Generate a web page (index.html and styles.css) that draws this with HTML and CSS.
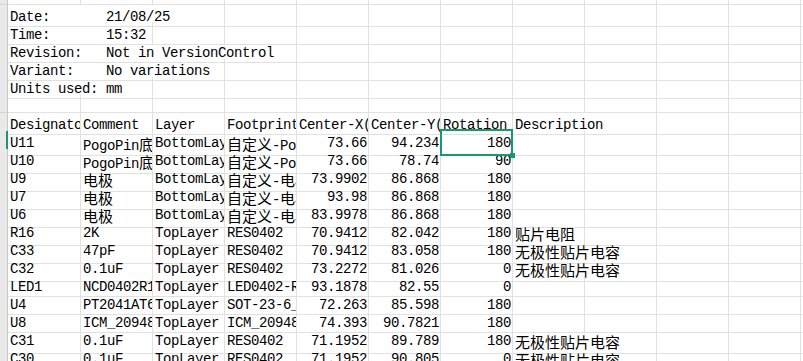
FILE: index.html
```html
<!DOCTYPE html>
<html lang="zh-CN">
<head>
<meta charset="utf-8">
<title>BOM</title>
<link rel="stylesheet" href="styles.css">
</head>
<body>
<div class="sheet">
  <div class="row top"><div class="rh"></div><div class="c"></div><div class="c"></div><div class="c"></div><div class="c"></div><div class="c"></div><div class="c"></div><div class="c"></div><div class="c"></div><div class="c"></div><div class="c"></div><div class="c"></div><div class="f"></div></div>

  <div class="row"><div class="rh"></div><div class="c s3">Date:       21/08/25</div><div class="c"></div><div class="c"></div><div class="c"></div><div class="c"></div><div class="c"></div><div class="c"></div><div class="c"></div><div class="c"></div><div class="f"></div></div>
  <div class="row"><div class="rh"></div><div class="c s2">Time:       15:32</div><div class="c"></div><div class="c"></div><div class="c"></div><div class="c"></div><div class="c"></div><div class="c"></div><div class="c"></div><div class="c"></div><div class="c"></div><div class="f"></div></div>
  <div class="row"><div class="rh"></div><div class="c s4">Revision:   Not in VersionControl</div><div class="c"></div><div class="c"></div><div class="c"></div><div class="c"></div><div class="c"></div><div class="c"></div><div class="c"></div><div class="f"></div></div>
  <div class="row"><div class="rh"></div><div class="c s3">Variant:    No variations</div><div class="c"></div><div class="c"></div><div class="c"></div><div class="c"></div><div class="c"></div><div class="c"></div><div class="c"></div><div class="c"></div><div class="f"></div></div>
  <div class="row"><div class="rh"></div><div class="c s2">Units used: mm</div><div class="c"></div><div class="c"></div><div class="c"></div><div class="c"></div><div class="c"></div><div class="c"></div><div class="c"></div><div class="c"></div><div class="c"></div><div class="f"></div></div>
  <div class="row"><div class="rh"></div><div class="c"></div><div class="c"></div><div class="c"></div><div class="c"></div><div class="c"></div><div class="c"></div><div class="c"></div><div class="c"></div><div class="c"></div><div class="c"></div><div class="c"></div><div class="f"></div></div>

  <div class="row"><div class="rh"></div><div class="c">Designator</div><div class="c">Comment</div><div class="c">Layer</div><div class="c">Footprint</div><div class="c">Center-X(mm)</div><div class="c">Center-Y(mm)</div><div class="c">Rotation</div><div class="c s2">Description</div><div class="c"></div><div class="c"></div><div class="f"></div></div>

  <div class="row"><div class="rh active"></div><div class="c">U11</div><div class="c">PogoPin<span class="z">底座</span></div><div class="c">BottomLayer</div><div class="c"><span class="z">自定义</span>-PogoPin</div><div class="c n">73.66</div><div class="c n">94.234</div><div class="c n sel">180<div class="selbox"><div class="handle"></div></div></div><div class="c"></div><div class="c"></div><div class="c"></div><div class="c"></div><div class="f"></div></div>
  <div class="row"><div class="rh"></div><div class="c">U10</div><div class="c">PogoPin<span class="z">底座</span></div><div class="c">BottomLayer</div><div class="c"><span class="z">自定义</span>-PogoPin</div><div class="c n">73.66</div><div class="c n">78.74</div><div class="c n">90</div><div class="c"></div><div class="c"></div><div class="c"></div><div class="c"></div><div class="f"></div></div>
  <div class="row"><div class="rh"></div><div class="c">U9</div><div class="c"><span class="z">电极</span></div><div class="c">BottomLayer</div><div class="c"><span class="z">自定义</span>-<span class="z">电极</span></div><div class="c n">73.9902</div><div class="c n">86.868</div><div class="c n">180</div><div class="c"></div><div class="c"></div><div class="c"></div><div class="c"></div><div class="f"></div></div>
  <div class="row"><div class="rh"></div><div class="c">U7</div><div class="c"><span class="z">电极</span></div><div class="c">BottomLayer</div><div class="c"><span class="z">自定义</span>-<span class="z">电极</span></div><div class="c n">93.98</div><div class="c n">86.868</div><div class="c n">180</div><div class="c"></div><div class="c"></div><div class="c"></div><div class="c"></div><div class="f"></div></div>
  <div class="row"><div class="rh"></div><div class="c">U6</div><div class="c"><span class="z">电极</span></div><div class="c">BottomLayer</div><div class="c"><span class="z">自定义</span>-<span class="z">电极</span></div><div class="c n">83.9978</div><div class="c n">86.868</div><div class="c n">180</div><div class="c"></div><div class="c"></div><div class="c"></div><div class="c"></div><div class="f"></div></div>
  <div class="row"><div class="rh"></div><div class="c">R16</div><div class="c">2K</div><div class="c">TopLayer</div><div class="c">RES0402</div><div class="c n">70.9412</div><div class="c n">82.042</div><div class="c n">180</div><div class="c"><span class="z">贴片电阻</span></div><div class="c"></div><div class="c"></div><div class="c"></div><div class="f"></div></div>
  <div class="row"><div class="rh"></div><div class="c">C33</div><div class="c">47pF</div><div class="c">TopLayer</div><div class="c">RES0402</div><div class="c n">70.9412</div><div class="c n">83.058</div><div class="c n">180</div><div class="c s2"><span class="z">无极性贴片电容</span></div><div class="c"></div><div class="c"></div><div class="f"></div></div>
  <div class="row"><div class="rh"></div><div class="c">C32</div><div class="c">0.1uF</div><div class="c">TopLayer</div><div class="c">RES0402</div><div class="c n">73.2272</div><div class="c n">81.026</div><div class="c n">0</div><div class="c s2"><span class="z">无极性贴片电容</span></div><div class="c"></div><div class="c"></div><div class="f"></div></div>
  <div class="row"><div class="rh"></div><div class="c">LED1</div><div class="c">NCD0402R1</div><div class="c">TopLayer</div><div class="c">LED0402-RD</div><div class="c n">93.1878</div><div class="c n">82.55</div><div class="c n">0</div><div class="c"></div><div class="c"></div><div class="c"></div><div class="c"></div><div class="f"></div></div>
  <div class="row"><div class="rh"></div><div class="c">U4</div><div class="c">PT2041AT6</div><div class="c">TopLayer</div><div class="c">SOT-23-6_L2.9-W1.6</div><div class="c n">72.263</div><div class="c n">85.598</div><div class="c n">180</div><div class="c"></div><div class="c"></div><div class="c"></div><div class="c"></div><div class="f"></div></div>
  <div class="row"><div class="rh"></div><div class="c">U8</div><div class="c">ICM_20948</div><div class="c">TopLayer</div><div class="c">ICM_20948</div><div class="c n">74.393</div><div class="c n">90.7821</div><div class="c n">180</div><div class="c"></div><div class="c"></div><div class="c"></div><div class="c"></div><div class="f"></div></div>
  <div class="row"><div class="rh"></div><div class="c">C31</div><div class="c">0.1uF</div><div class="c">TopLayer</div><div class="c">RES0402</div><div class="c n">71.1952</div><div class="c n">89.789</div><div class="c n">180</div><div class="c s2"><span class="z">无极性贴片电容</span></div><div class="c"></div><div class="c"></div><div class="f"></div></div>
  <div class="row"><div class="rh"></div><div class="c">C30</div><div class="c">0.1uF</div><div class="c">TopLayer</div><div class="c">RES0402</div><div class="c n">71.1952</div><div class="c n">90.805</div><div class="c n">0</div><div class="c s2"><span class="z">无极性贴片电容</span></div><div class="c"></div><div class="c"></div><div class="f"></div></div>
</div>
</body>
</html>
```
FILE: styles.css
```css
html, body {
  margin: 0;
  padding: 0;
  background: #ffffff;
  overflow: hidden;
}

.sheet {
  width: 803px;
  height: 361px;
  overflow: hidden;
  font-family: "Liberation Mono", "Noto Sans CJK SC", monospace;
  font-size: 14px;
  letter-spacing: -0.4px;
  color: #000000;
}

.row {
  display: grid;
  grid-template-columns: 8px 73px repeat(10, 72px) 1fr;
  height: 18px;
}

.row.top {
  height: 5px;
}

.rh {
  box-sizing: border-box;
  background: #e9e9e9;
  border-right: 1px solid #c8c8c8;
  border-bottom: 1px solid #d4d4d4;
}

.rh.active {
  border-right: 2px solid #179a6b;
}

.c, .f {
  box-sizing: border-box;
  border-right: 1px solid #e1e1e1;
  border-bottom: 1px solid #e1e1e1;
  padding: 4px 1px 0 2px;
  line-height: 17px;
  white-space: pre;
  overflow-x: clip;
  overflow-y: visible;
  min-width: 0;
}

.f {
  border-right: none;
}

.s2 { grid-column: span 2; }
.s3 { grid-column: span 3; }
.s4 { grid-column: span 4; }

.n {
  text-align: right;
}

.z {
  font-family: "Noto Sans CJK SC", sans-serif;
  font-size: 15px;
  letter-spacing: 0;
}

.c.sel {
  position: relative;
  overflow: visible;
  z-index: 2;
}

.selbox {
  position: absolute;
  left: -1px;
  top: -2px;
  right: -1px;
  bottom: -1px;
  border: 2px solid #179a6b;
}

.handle {
  position: absolute;
  right: -4px;
  bottom: -4px;
  width: 5px;
  height: 5px;
  background: #179a6b;
}
```
